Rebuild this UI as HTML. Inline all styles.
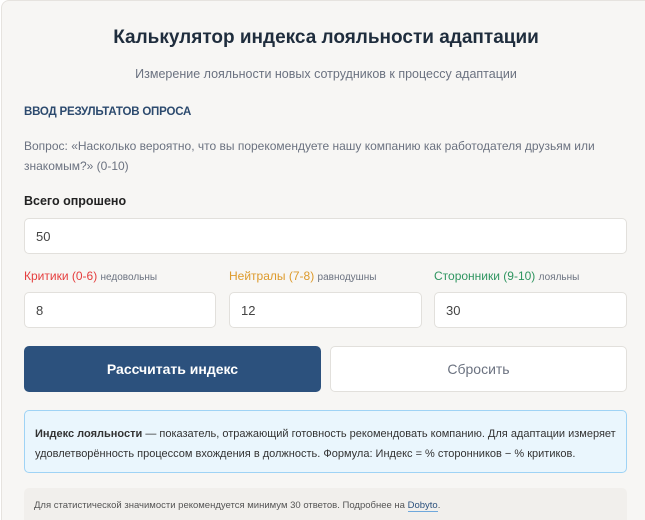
<!DOCTYPE html>
<html><head><meta charset="utf-8"><style>
*{box-sizing:border-box;margin:0;padding:0}
html,body{width:645px;height:520px;overflow:hidden}
body{background:#fff;font-family:"Liberation Sans","DejaVu Sans",sans-serif;position:relative}
.card{position:absolute;left:1px;top:0;width:644px;height:520px;background:#f7f6f4;border:1px solid #e6e3df;border-right:none;border-bottom:none;border-radius:8px 0 0 0}
.a{position:absolute}
h1{position:absolute;left:0;width:652px;top:27px;text-align:center;font-size:19px;font-weight:bold;color:#1f2d3d}
.sub{left:0;width:652px;top:67px;text-align:center;font-size:12.5px;color:#6b7280}
.sec{left:24px;top:106px;font-size:11.5px;color:#2c4a6e;font-weight:bold;letter-spacing:-0.2px}
.q{left:24px;top:136px;width:600px;font-size:12px;line-height:20px;color:#6b7280}
.lbl{font-size:12.5px;font-weight:bold;color:#222}
.inp{position:absolute;background:#fff;border:1px solid #e2e0dc;border-radius:5px;font-size:13px;color:#444;padding-left:11px;display:flex;align-items:center}
.small{font-size:10px;color:#6b7280;font-weight:normal}
.btn{position:absolute;border-radius:5px;display:flex;align-items:center;justify-content:center;font-size:14px;font-weight:bold}
</style></head><body>
<div class="card"></div>
<h1>Калькулятор индекса лояльности адаптации</h1>
<div class="a sub">Измерение лояльности новых сотрудников к процессу адаптации</div>
<div class="a sec">ВВОД РЕЗУЛЬТАТОВ ОПРОСА</div>
<div class="a q">Вопрос: «Насколько вероятно, что вы порекомендуете нашу компанию как работодателя друзьям или знакомым?» (0-10)</div>
<div class="a lbl" style="left:24px;top:194px">Всего опрошено</div>
<div class="inp" style="left:24px;top:218px;width:603px;height:36px">50</div>
<div class="a lbl" style="left:24px;top:269px;color:#e53e3e;font-weight:normal;font-size:12px">Критики (0-6) <span class="small">недовольны</span></div>
<div class="a lbl" style="left:229px;top:269px;color:#dd9a2b;font-weight:normal;font-size:12px">Нейтралы (7-8) <span class="small">равнодушны</span></div>
<div class="a lbl" style="left:434px;top:269px;color:#2f9560;font-weight:normal;font-size:12px">Сторонники (9-10) <span class="small">лояльны</span></div>
<div class="inp" style="left:24px;top:292px;width:192px;height:36px">8</div>
<div class="inp" style="left:229px;top:292px;width:193px;height:36px">12</div>
<div class="inp" style="left:434px;top:292px;width:193px;height:36px">30</div>
<div class="btn" style="left:24px;top:346px;width:297px;height:46px;background:#2c517d;color:#fff">Рассчитать индекс</div>
<div class="btn" style="left:330px;top:346px;width:297px;height:46px;background:#fff;border:1px solid #e2e0dc;color:#6b7280;font-weight:normal">Сбросить</div>
<div class="a" style="left:24px;top:410px;width:603px;height:63px;background:#eaf6fd;border:1px solid #9fd3f5;border-radius:5px;padding:13px 10px;font-size:11px;line-height:20px;color:#333"><b>Индекс лояльности</b> — показатель, отражающий готовность рекомендовать компанию. Для адаптации измеряет удовлетворённость процессом вхождения в должность. Формула: Индекс = % сторонников − % критиков.</div>
<div class="a" style="left:24px;top:488px;width:603px;height:32px;background:#f1efec;border-radius:5px 5px 0 0;padding:12px 10px 0;font-size:9.5px;color:#555">Для статистической значимости рекомендуется минимум 30 ответов. Подробнее на <span style="color:#2c517d;border-bottom:1px solid #6fa8dc">Dobyto</span>.</div>
</body></html>
